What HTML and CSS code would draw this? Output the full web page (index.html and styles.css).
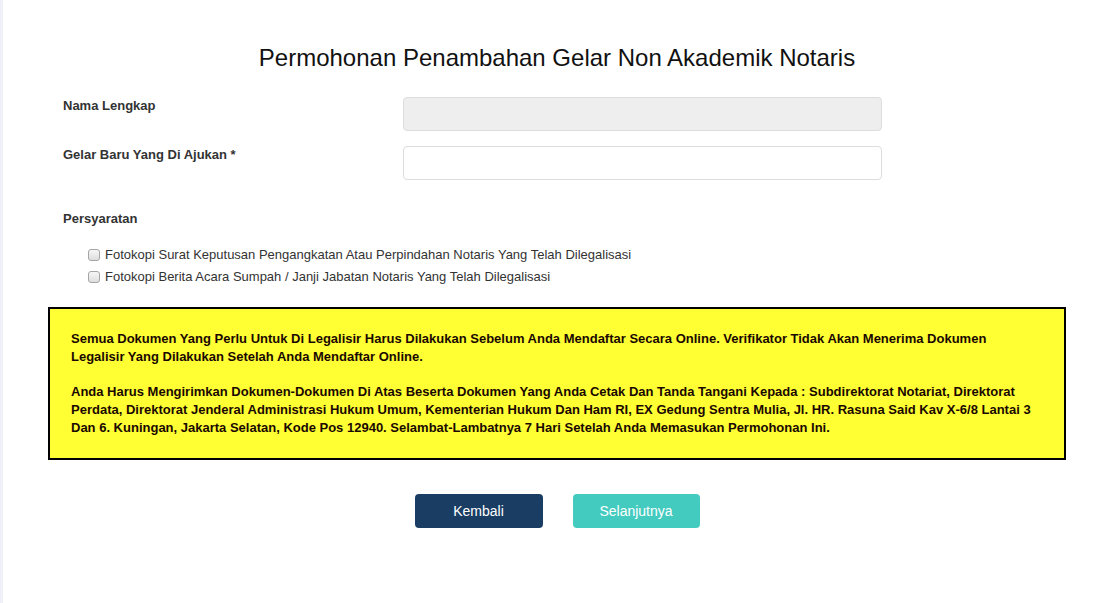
FILE: index.html
```html
<!DOCTYPE html>
<html lang="id">
<head>
<meta charset="utf-8">
<title>Permohonan Penambahan Gelar Non Akademik Notaris</title>
<link rel="stylesheet" href="styles.css">
</head>
<body>
<div class="page">
  <h1 class="title">Permohonan Penambahan Gelar Non Akademik Notaris</h1>
  <div class="form">
    <div class="row">
      <label class="label">Nama Lengkap</label>
      <input class="input input-disabled" type="text" disabled>
    </div>
    <div class="row">
      <label class="label">Gelar Baru Yang Di Ajukan *</label>
      <input class="input" type="text">
    </div>
    <div class="section-label">Persyaratan</div>
    <div class="checks">
      <label class="check"><input type="checkbox" class="cb"><span>Fotokopi Surat Keputusan Pengangkatan Atau Perpindahan Notaris Yang Telah Dilegalisasi</span></label>
      <label class="check"><input type="checkbox" class="cb"><span>Fotokopi Berita Acara Sumpah / Janji Jabatan Notaris Yang Telah Dilegalisasi</span></label>
    </div>
  </div>
  <div class="notice">
    <p>Semua Dokumen Yang Perlu Untuk Di Legalisir Harus Dilakukan Sebelum Anda Mendaftar Secara Online. Verifikator Tidak Akan Menerima Dokumen Legalisir Yang Dilakukan Setelah Anda Mendaftar Online.</p>
    <p>Anda Harus Mengirimkan Dokumen-Dokumen Di Atas Beserta Dokumen Yang Anda Cetak Dan Tanda Tangani Kepada : Subdirektorat Notariat, Direktorat Perdata, Direktorat Jenderal Administrasi Hukum Umum, Kementerian Hukum Dan Ham RI, EX Gedung Sentra Mulia, Jl. HR. Rasuna Said Kav X-6/8 Lantai 3 Dan 6. Kuningan, Jakarta Selatan, Kode Pos 12940. Selambat-Lambatnya 7 Hari Setelah Anda Memasukan Permohonan Ini.</p>
  </div>
  <div class="actions">
    <button class="btn btn-back" type="button">Kembali</button>
    <button class="btn btn-next" type="button">Selanjutnya</button>
  </div>
</div>
</body>
</html>
```
FILE: styles.css
```css
html, body {
  margin: 0;
  padding: 0;
  background: #ffffff;
}
body {
  border-left: 3px solid #eff1f8;
  min-height: 603px;
  box-sizing: border-box;
  font-family: "Liberation Sans", Arial, sans-serif;
  color: #333333;
}
.page {
  width: 1018px;
  margin-left: 45px;
  padding-top: 45px;
}
.title {
  margin: 0;
  font-size: 24px;
  font-weight: normal;
  line-height: 26px;
  text-align: center;
  color: #111111;
}
.form {
  padding: 0 15px;
  margin-top: 25px;
}
.row {
  display: flex;
  align-items: flex-start;
  margin-bottom: 15px;
}
.row + .row {
  margin-top: -1px;
}
.label {
  width: 340px;
  font-size: 13px;
  font-weight: bold;
  line-height: 19px;
  padding-top: 0;
}
.input {
  width: 479px;
  height: 34px;
  box-sizing: border-box;
  border: 1px solid #dddddd;
  border-radius: 4px;
  background: #ffffff;
  margin: 1px 0 0 0;
  padding: 6px 12px;
  font: inherit;
}
.input-disabled {
  background: #eeeeee;
}
.section-label {
  font-size: 13px;
  font-weight: bold;
  line-height: 19px;
  margin-top: 29px;
}
.checks {
  margin-top: 16px;
  padding-left: 25px;
}
.check {
  display: flex;
  align-items: center;
  height: 22px;
  font-size: 13px;
  line-height: 22px;
  color: #333333;
}
.cb {
  appearance: none;
  -webkit-appearance: none;
  width: 12px;
  height: 12px;
  margin: 0 5px 0 0;
  border: 1px solid #a5a5a5;
  border-radius: 3px;
  background: linear-gradient(#f6f6f6, #dedede);
  box-sizing: border-box;
}
.notice {
  margin-top: 19px;
  border: 2px solid #000000;
  background: #ffff33;
  padding: 21px 30px 21px 21px;
  font-size: 13px;
  font-weight: bold;
  line-height: 18px;
  color: #1a0800;
}
.notice p {
  margin: 0;
}
.notice p + p {
  margin-top: 17px;
}
.actions {
  display: flex;
  justify-content: center;
  gap: 30px;
  margin-top: 34px;
}
.btn {
  width: 128px;
  height: 34px;
  border: none;
  border-radius: 4px;
  color: #ffffff;
  font-family: "Liberation Sans", Arial, sans-serif;
  font-size: 14px;
  cursor: pointer;
}
.btn-back {
  background: #193d63;
}
.btn-next {
  width: 127px;
  background: #43cbc0;
}
```
